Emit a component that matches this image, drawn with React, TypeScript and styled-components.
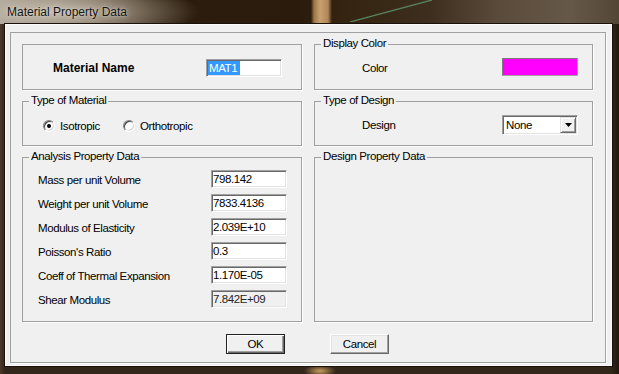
import React from "react";
import styled, { createGlobalStyle, css } from "styled-components";

const GlobalStyle = createGlobalStyle`
  html, body {
    margin: 0;
    padding: 0;
    background: #2a1e12;
  }
  body {
    font-family: "Liberation Sans", Arial, sans-serif;
    font-size: 11.5px;
    letter-spacing: -0.4px;
    color: #000;
  }
`;

const faceColor = "#f0f0f0";

const Window = styled.div`
  width: 619px;
  height: 374px;
  display: flex;
  flex-direction: column;
  overflow: hidden;
  background:
    radial-gradient(ellipse 16px 6px at 320px 371px, rgba(214, 170, 100, 0.9), rgba(214, 170, 100, 0) 100%),
    linear-gradient(90deg, #4b3a28 0, #33261a 5px, #33261a 611px, #22190f 619px);
`;

const TitleBar = styled.div`
  height: 24px;
  flex: none;
  display: flex;
  align-items: center;
  padding-left: 7px;
  background:
    linear-gradient(to top left, transparent calc(50% - 1.2px), #5c8c68 50%, transparent calc(50% + 1.2px)) no-repeat 350px 0 / 82px 22px,
    linear-gradient(90deg, transparent 311px, #9c7646 314px, #c9a170 320px, #b08858 328px, transparent 332px),
    radial-gradient(ellipse 150px 30px at 50px 12px, rgba(196, 188, 174, 0.95), rgba(196, 188, 174, 0) 100%),
    linear-gradient(90deg, #a49a8b 0, #6e5e4b 90px, #3e2e1c 150px, #2b1c0d 190px, #2a1b0c 300px, #33230f 340px, #3d2e1e 430px, #5a4b3b 500px, #665848 570px, #544636 619px);
`;

const Title = styled.span`
  font-size: 12px;
  letter-spacing: 0;
  color: #141414;
  text-shadow: 0 0 6px rgba(232, 226, 214, 0.9), 0 0 2px rgba(232, 226, 214, 0.7);
`;

const Client = styled.div`
  flex: 1;
  display: flex;
  margin: 0 7px 8px 5px;
  background: ${faceColor};
  border: 1px solid #fbfbfb;
  box-shadow: 0 0 0 1px #1a120a;
`;

const Panel = styled.div`
  flex: 1;
  display: flex;
  flex-direction: column;
  margin: 7px 5px 2px 4px;
  padding: 11px 12px 0 11px;
  border: 1px solid #a0a0a0;
  box-shadow: 1px 1px 0 #fff;
`;

const Grid = styled.div`
  display: grid;
  grid-template-columns: 280px 279px;
  grid-template-rows: 46px 45px 165px;
  column-gap: 12px;
  row-gap: 11px;
`;

const GroupBox = styled.div`
  box-sizing: border-box;
  min-width: 0;
  display: flex;
  flex-direction: column;
  border: 1px solid #a0a0a0;
  box-shadow: 1px 1px 0 #fff;
`;

const Caption = styled.span`
  align-self: flex-start;
  margin: -8px 0 0 6px;
  padding: 0 2px;
  line-height: 13px;
  background: ${faceColor};
  white-space: nowrap;
`;

const Body = styled.div<{ $pad: string }>`
  flex: 1;
  display: flex;
  flex-direction: column;
  justify-content: center;
  padding: ${(p) => p.$pad};
`;

const DataList = styled.div`
  display: flex;
  flex-direction: column;
  gap: 6px;
  padding: 7px 0 0 15px;
`;

const Field = styled.div<{ $labelWidth: number }>`
  display: grid;
  grid-template-columns: ${(p) => p.$labelWidth}px 76px;
  align-items: center;
`;

const Label = styled.span<{ $bold?: boolean }>`
  padding-top: 2px;
  line-height: 13px;
  white-space: nowrap;
  ${(p) =>
    p.$bold &&
    css`
      font-size: 12px;
      font-weight: bold;
      letter-spacing: 0;
    `}
`;

const sunken = css`
  box-sizing: border-box;
  border: 1px solid;
  border-color: #a0a0a0 #fff #fff #a0a0a0;
  box-shadow: inset 1px 1px 0 #696969, inset -1px -1px 0 #e3e3e3;
`;

const TextBox = styled.div<{ $disabled?: boolean }>`
  ${sunken};
  width: 76px;
  height: 18px;
  padding-left: 1px;
  display: flex;
  align-items: center;
  line-height: 13px;
  white-space: nowrap;
  overflow: hidden;
  background: ${(p) => (p.$disabled ? faceColor : "#fff")};
  color: ${(p) => (p.$disabled ? "#262626" : "#000")};
`;

const Selected = styled.span`
  height: 14px;
  line-height: 14px;
  padding: 0 3px 0 1px;
  background: #3399ff;
  color: #fff;
`;

const Swatch = styled.div<{ $color: string }>`
  box-sizing: border-box;
  width: 76px;
  height: 18px;
  background: ${(p) => p.$color};
  border: 1px solid;
  border-color: #7c7c7c #a6a6a6 #a6a6a6 #7c7c7c;
`;

const Select = styled.div`
  ${sunken};
  width: 76px;
  height: 20px;
  padding: 1px;
  display: flex;
  background: #fff;
`;

const SelectValue = styled.span`
  flex: 1;
  display: flex;
  align-items: center;
  padding-left: 2px;
`;

const DropButton = styled.span`
  box-sizing: border-box;
  width: 16px;
  display: flex;
  align-items: center;
  justify-content: center;
  background: ${faceColor};
  border: 1px solid;
  border-color: #e3e3e3 #696969 #696969 #e3e3e3;
  box-shadow: inset 1px 1px 0 #fff, inset -1px -1px 0 #a0a0a0;
`;

const RadioGroup = styled.div`
  display: flex;
  align-items: center;
  padding-left: 20px;
`;

const RadioItem = styled.span<{ $width?: number }>`
  display: flex;
  align-items: center;
  gap: 5px;
  width: ${(p) => (p.$width ? `${p.$width}px` : "auto")};
  line-height: 13px;
`;

const RadioCircle = styled.span<{ $checked?: boolean }>`
  box-sizing: border-box;
  width: 12px;
  height: 12px;
  border-radius: 50%;
  display: flex;
  align-items: center;
  justify-content: center;
  background: #fff;
  border: 1px solid;
  border-color: #808080 #fff #fff #808080;
  box-shadow: inset 1px 1px 0 #404040, inset -1px -1px 0 #d4d4d4;
  ${(p) =>
    p.$checked &&
    css`
      &::after {
        content: "";
        width: 4px;
        height: 4px;
        border-radius: 50%;
        background: #000;
      }
    `}
`;

const ButtonRow = styled.div`
  display: flex;
  justify-content: center;
  gap: 45px;
  margin-top: 12px;
`;

const Button = styled.div<{ $default?: boolean }>`
  box-sizing: border-box;
  width: 59px;
  height: 20px;
  display: flex;
  align-items: center;
  justify-content: center;
  background: ${faceColor};
  border: 1px solid;
  border-color: #fff #696969 #696969 #fff;
  box-shadow: inset -1px -1px 0 #a0a0a0, inset 1px 1px 0 #e3e3e3;
  ${(p) =>
    p.$default &&
    css`
      border-color: #222;
      box-shadow: inset 1px 1px 0 #fff, inset -1px -1px 0 #696969, inset -2px -2px 0 #a0a0a0;
    `}
`;

const analysisRows = [
  { label: "Mass per unit Volume", value: "798.142" },
  { label: "Weight per unit Volume", value: "7833.4136" },
  { label: "Modulus of Elasticity", value: "2.039E+10" },
  { label: "Poisson's Ratio", value: "0.3" },
  { label: "Coeff of Thermal Expansion", value: "1.170E-05" },
  { label: "Shear Modulus", value: "7.842E+09", disabled: true },
];

function App() {
  return (
    <>
      <GlobalStyle />
      <Window>
        <TitleBar>
          <Title>Material Property Data</Title>
        </TitleBar>
        <Client>
          <Panel>
            <Grid>
              <GroupBox>
                <Body $pad="1px 0 0 30px">
                  <Field $labelWidth={153}>
                    <Label $bold>Material Name</Label>
                    <TextBox>
                      <Selected>MAT1</Selected>
                    </TextBox>
                  </Field>
                </Body>
              </GroupBox>

              <GroupBox>
                <Caption>Display Color</Caption>
                <Body $pad="0 0 5px 47px">
                  <Field $labelWidth={140}>
                    <Label>Color</Label>
                    <Swatch $color="#ff00ff" />
                  </Field>
                </Body>
              </GroupBox>

              <GroupBox>
                <Caption>Type of Material</Caption>
                <Body $pad="0">
                  <RadioGroup>
                    <RadioItem $width={80}>
                      <RadioCircle $checked />
                      Isotropic
                    </RadioItem>
                    <RadioItem>
                      <RadioCircle />
                      Orthotropic
                    </RadioItem>
                  </RadioGroup>
                </Body>
              </GroupBox>

              <GroupBox>
                <Caption>Type of Design</Caption>
                <Body $pad="0 0 3px 47px">
                  <Field $labelWidth={140}>
                    <Label>Design</Label>
                    <Select>
                      <SelectValue>None</SelectValue>
                      <DropButton>
                        <svg width="7" height="4" viewBox="0 0 7 4">
                          <polygon points="0,0 7,0 3.5,4" fill="#000" />
                        </svg>
                      </DropButton>
                    </Select>
                  </Field>
                </Body>
              </GroupBox>

              <GroupBox>
                <Caption>Analysis Property Data</Caption>
                <DataList>
                  {analysisRows.map((row) => (
                    <Field key={row.label} $labelWidth={173}>
                      <Label>{row.label}</Label>
                      <TextBox $disabled={row.disabled}>{row.value}</TextBox>
                    </Field>
                  ))}
                </DataList>
              </GroupBox>

              <GroupBox>
                <Caption>Design Property Data</Caption>
              </GroupBox>
            </Grid>

            <ButtonRow>
              <Button $default>OK</Button>
              <Button>Cancel</Button>
            </ButtonRow>
          </Panel>
        </Client>
      </Window>
    </>
  );
}

export default App;
